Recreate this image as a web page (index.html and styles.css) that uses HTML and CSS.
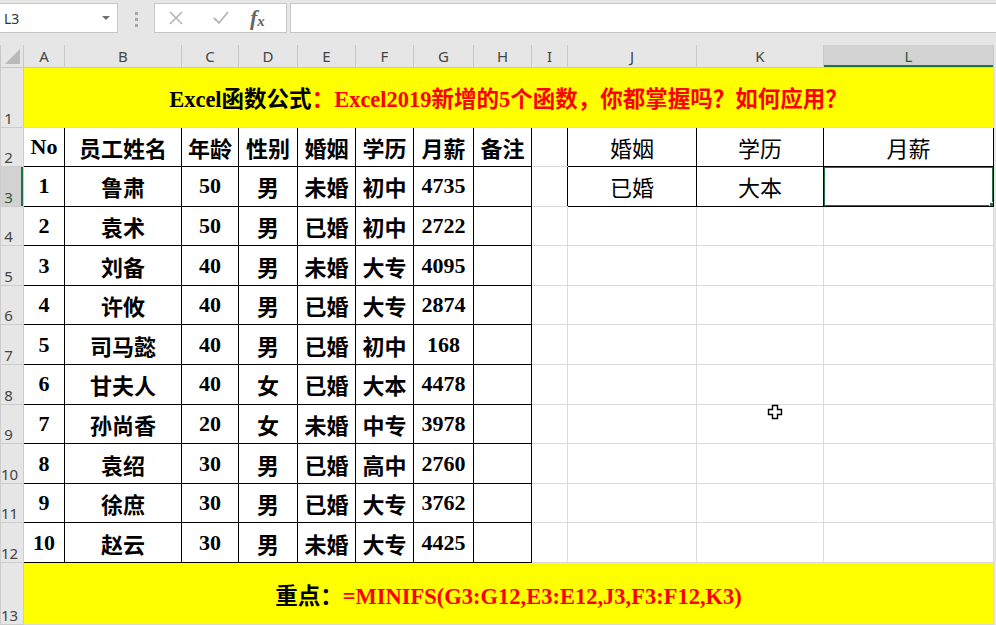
FILE: index.html
```html
<!DOCTYPE html>
<html>
<head>
    <title>Excel MINIFS</title>
    <link rel="stylesheet" href="styles.css">
</head>
<body>
    <div class="ribbon">
        <div class="namebox"><span>L3</span><span class="caret"></span></div>
        <div class="grip"><i></i><i></i><i></i></div>
        <div class="fxbox">
            <svg class="ico" width="16" height="16" viewBox="0 0 16 16"><path d="M2 2 L14 14 M14 2 L2 14" stroke="#b5b5b5" stroke-width="1.6" fill="none"/></svg>
            <svg class="ico" width="18" height="16" viewBox="0 0 18 16"><path d="M2 8 L7 13 L16 2" stroke="#b5b5b5" stroke-width="1.8" fill="none"/></svg>
            <span class="fx">f<sub>x</sub></span>
        </div>
        <div class="formula"></div>
    </div>

    <table class="sheet">
        <colgroup>
            <col class="c-rh"><col class="c-a"><col class="c-b"><col class="c-c"><col class="c-d"><col class="c-e">
            <col class="c-f"><col class="c-g"><col class="c-h"><col class="c-i"><col class="c-j"><col class="c-k"><col class="c-l">
        </colgroup>
        <tr class="heads">
            <th class="corner"><span class="tri"></span></th>
            <th>A</th><th>B</th><th>C</th><th>D</th><th>E</th><th>F</th><th>G</th><th>H</th><th>I</th><th>J</th><th>K</th><th class="sel">L</th>
        </tr>
        <tr class="r-title">
            <td class="rh">1</td>
            <td colspan="12" class="banner">Excel函数公式<span class="red">：Excel2019新增的5个函数，你都掌握吗？如何应用？</span></td>
        </tr>
        <tr class="r">
            <td class="rh">2</td>
            <td class="t">No</td><td class="t">员工姓名</td><td class="t">年龄</td><td class="t">性别</td><td class="t">婚姻</td><td class="t">学历</td><td class="t">月薪</td><td class="t">备注</td>
            <td class="edge"></td><td class="t q">婚姻</td><td class="t q">学历</td><td class="t q">月薪</td>
        </tr>
        <tr class="r">
            <td class="rh cur">3</td>
            <td class="t">1</td><td class="t">鲁肃</td><td class="t">50</td><td class="t">男</td><td class="t">未婚</td><td class="t">初中</td><td class="t">4735</td><td class="t"></td>
            <td class="edge"></td><td class="t q">已婚</td><td class="t q">大本</td><td class="t q active"></td>
        </tr>
        <tr class="r">
            <td class="rh">4</td>
            <td class="t">2</td><td class="t">袁术</td><td class="t">50</td><td class="t">男</td><td class="t">已婚</td><td class="t">初中</td><td class="t">2722</td><td class="t"></td>
            <td></td><td></td><td></td><td></td>
        </tr>
        <tr class="r">
            <td class="rh">5</td>
            <td class="t">3</td><td class="t">刘备</td><td class="t">40</td><td class="t">男</td><td class="t">未婚</td><td class="t">大专</td><td class="t">4095</td><td class="t"></td>
            <td></td><td></td><td></td><td></td>
        </tr>
        <tr class="r">
            <td class="rh">6</td>
            <td class="t">4</td><td class="t">许攸</td><td class="t">40</td><td class="t">男</td><td class="t">已婚</td><td class="t">大专</td><td class="t">2874</td><td class="t"></td>
            <td></td><td></td><td></td><td></td>
        </tr>
        <tr class="r">
            <td class="rh">7</td>
            <td class="t">5</td><td class="t">司马懿</td><td class="t">40</td><td class="t">男</td><td class="t">已婚</td><td class="t">初中</td><td class="t">168</td><td class="t"></td>
            <td></td><td></td><td></td><td></td>
        </tr>
        <tr class="r">
            <td class="rh">8</td>
            <td class="t">6</td><td class="t">甘夫人</td><td class="t">40</td><td class="t">女</td><td class="t">已婚</td><td class="t">大本</td><td class="t">4478</td><td class="t"></td>
            <td></td><td></td><td></td><td></td>
        </tr>
        <tr class="r">
            <td class="rh">9</td>
            <td class="t">7</td><td class="t">孙尚香</td><td class="t">20</td><td class="t">女</td><td class="t">未婚</td><td class="t">中专</td><td class="t">3978</td><td class="t"></td>
            <td></td><td></td><td></td><td></td>
        </tr>
        <tr class="r">
            <td class="rh">10</td>
            <td class="t">8</td><td class="t">袁绍</td><td class="t">30</td><td class="t">男</td><td class="t">已婚</td><td class="t">高中</td><td class="t">2760</td><td class="t"></td>
            <td></td><td></td><td></td><td></td>
        </tr>
        <tr class="r">
            <td class="rh">11</td>
            <td class="t">9</td><td class="t">徐庶</td><td class="t">30</td><td class="t">男</td><td class="t">已婚</td><td class="t">大专</td><td class="t">3762</td><td class="t"></td>
            <td></td><td></td><td></td><td></td>
        </tr>
        <tr class="r">
            <td class="rh">12</td>
            <td class="t">10</td><td class="t">赵云</td><td class="t">30</td><td class="t">男</td><td class="t">未婚</td><td class="t">大专</td><td class="t">4425</td><td class="t"></td>
            <td></td><td></td><td></td><td></td>
        </tr>
        <tr class="r-foot">
            <td class="rh">13</td>
            <td colspan="12" class="banner">重点：<span class="red">=MINIFS(G3:G12,E3:E12,J3,F3:F12,K3)</span></td>
        </tr>
    </table>

    <svg class="cursor" width="16" height="16" viewBox="0 0 16 16">
        <path d="M5.5 1.5 H10.5 V5.5 H14.5 V10.5 H10.5 V14.5 H5.5 V10.5 H1.5 V5.5 H5.5 Z" fill="#fff" stroke="#000" stroke-width="1.4"/>
    </svg>
</body>
</html>
```

FILE: styles.css
```css
body {
    margin: 0;
    background: #e6e6e6;
    font-family: "Liberation Serif", "Noto Sans CJK SC", serif;
    overflow: hidden;
    position: relative;
    height: 625px;
}

/* formula bar */
.ribbon {
    height: 45px;
    display: flex;
    align-items: flex-start;
    padding-top: 3px;
    box-sizing: border-box;
}

.namebox, .fxbox, .formula {
    height: 30px;
    background: #fff;
    border: 1px solid #c6c6c6;
    box-sizing: border-box;
}

.namebox {
    width: 119px;
    margin-left: -1px;
    display: flex;
    align-items: center;
    justify-content: space-between;
    padding: 0 7px 0 4px;
    font-family: "Noto Sans", sans-serif;
    font-size: 14px;
    color: #333;
}

.caret {
    width: 0;
    height: 0;
    border-left: 4px solid transparent;
    border-right: 4px solid transparent;
    border-top: 4px solid #6f6f6f;
}

.grip {
    width: 36px;
    display: flex;
    flex-direction: column;
    align-items: center;
    gap: 3px;
    padding-top: 9px;
}

.grip i {
    width: 3px;
    height: 3px;
    background: #a8a8a8;
}

.fxbox {
    width: 133px;
    display: flex;
    align-items: center;
    padding-left: 13px;
}

.fxbox .ico { margin-right: 28px; }
.fxbox .ico + .ico { margin-right: 20px; }

.fx {
    font-family: "Liberation Serif", serif;
    font-style: italic;
    font-weight: bold;
    font-size: 22px;
    color: #666;
    line-height: 1;
}

.fx sub {
    font-size: 15px;
    vertical-align: -1px;
}

.formula {
    flex: 1;
    margin-left: 3px;
    margin-right: -2px;
}

/* the sheet */
.sheet {
    border-collapse: collapse;
    table-layout: fixed;
    width: 993px;
}

.c-rh { width: 23px; }
.c-a { width: 41px; }
.c-b { width: 117px; }
.c-c { width: 57px; }
.c-d { width: 59px; }
.c-e { width: 58px; }
.c-f { width: 58px; }
.c-g { width: 60px; }
.c-h { width: 58px; }
.c-i { width: 36px; }
.c-j { width: 129px; }
.c-k { width: 127px; }
.c-l { width: 170px; }

.heads { height: 22px; }

.heads th {
    background: #e6e6e6;
    border: 1px solid #c8c8c8;
    border-top: none;
    font-family: "Noto Sans", sans-serif;
    font-weight: normal;
    font-size: 15px;
    color: #444;
    padding: 0;
    line-height: 20px;
}

.heads th.sel {
    background: #d2d2d2;
    color: #2a5a40;
    box-shadow: inset 0 -2px 0 #217346;
}

.corner {
    position: relative;
}

.tri {
    position: absolute;
    right: 3px;
    bottom: 3px;
    width: 0;
    height: 0;
    border-left: 15px solid transparent;
    border-bottom: 15px solid #b9b9b9;
}

td {
    border: 1px solid #dadada;
    background: #fff;
    padding: 0;
    text-align: center;
    vertical-align: middle;
    font-size: 22px;
    font-weight: bold;
    color: #000;
    white-space: nowrap;
    overflow: hidden;
}

.rh {
    background: #e6e6e6;
    border-color: #cdcdcd;
    font-family: "Noto Sans", sans-serif;
    font-weight: normal;
    font-size: 15px;
    color: #444;
    vertical-align: bottom;
    text-align: center;
    padding-right: 7px;
    line-height: 18px;
}

.rh.cur {
    background: #d2d2d2;
    box-shadow: inset -2px 0 0 #217346;
    color: #2a5a40;
}

.r-title { height: 60px; }
.r { height: 39.6px; }
.r-foot { height: 62px; }

.banner {
    background: #ffff00;
    border-top: none;
    border-color: #ffff00 #dadada #dadada #dadada;
    font-size: 22.5px;
}

.red { color: #ff0000; }

.t { border: 1px solid #000; }

.q { font-weight: normal; }

.edge { border-right: 1px solid #000; }

.active {
    position: relative;
}

.active::after {
    content: "";
    position: absolute;
    left: -1px;
    top: -1px;
    right: -1px;
    bottom: -1px;
    border: 2px solid #217346;
}

.active::before {
    content: "";
    position: absolute;
    right: -3px;
    bottom: -3px;
    width: 5px;
    height: 5px;
    background: #217346;
    border: 1px solid #fff;
    z-index: 1;
}

.cursor {
    position: absolute;
    left: 767px;
    top: 404px;
}
```
